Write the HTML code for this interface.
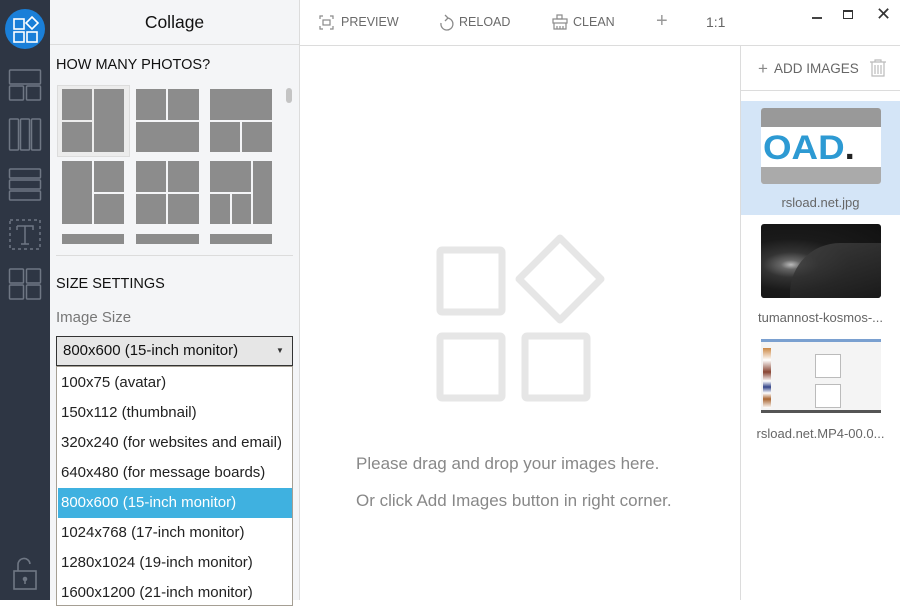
<!DOCTYPE html>
<html><head><meta charset="utf-8"><style>
*{margin:0;padding:0;box-sizing:border-box}
body{width:900px;height:600px;overflow:hidden;position:relative;background:#fff;font-family:"Liberation Sans","Noto Sans CJK SC",sans-serif;color:#222}
.abs{position:absolute}
#side{left:0;top:0;width:50px;height:600px;background:#2e3644}
#left{left:50px;top:0;width:250px;height:600px;background:#f4f5f7;border-right:1px solid #dcdcdc}
.t{position:absolute;white-space:nowrap}
.g{position:absolute;background:#8c8c8c}
.tb{color:#6a6a6a;font-size:12.5px}
.opt{position:absolute;left:1px;width:234px;height:30px;line-height:30px;padding-left:3px;font-size:15px;color:#222}
</style></head><body>
<div id="side" class="abs">
  <div class="abs" style="left:5px;top:9px;width:40px;height:40px;border-radius:50%;background:#1a7fd8"></div>
  <svg class="abs" style="left:0;top:0" width="50" height="300" fill="none" stroke="#fff" stroke-width="1.6">
    <rect x="14" y="19" width="10" height="10"/><rect x="14" y="32" width="10" height="10"/><rect x="27" y="32" width="10" height="10"/>
    <path d="M32 17 L38 23 L32 29 L26 23Z"/>
    <g stroke="#6f7784" stroke-width="1.5">
      <rect x="9.5" y="70" width="31" height="14" rx="1"/><rect x="9.5" y="86" width="14" height="14" rx="1"/><rect x="26.5" y="86" width="14" height="14" rx="1"/>
      <rect x="9.5" y="119" width="9" height="31" rx="1"/><rect x="20.5" y="119" width="9" height="31" rx="1"/><rect x="31.5" y="119" width="9" height="31" rx="1"/>
      <rect x="9.5" y="169" width="31" height="9" rx="1"/><rect x="9.5" y="180" width="31" height="9" rx="1"/><rect x="9.5" y="191" width="31" height="9" rx="1"/>
      <rect x="10" y="220" width="30" height="29" stroke-dasharray="3 3"/>
      <path d="M17 226 H33 V230 M17 226 V230 M25 226 V244 M21 244 H29"/>
      <rect x="9.5" y="269" width="14" height="14" rx="1"/><rect x="26.5" y="269" width="14" height="14" rx="1"/><rect x="9.5" y="285" width="14" height="14" rx="1"/><rect x="26.5" y="285" width="14" height="14" rx="1"/>
    </g>
  </svg>
  <svg class="abs" style="left:0;top:555px" width="50" height="45" fill="none" stroke="#6f7784" stroke-width="1.6">
    <rect x="14" y="16" width="22" height="18"/><path d="M18 16 V10 a6 6 0 0 1 12 -1"/><circle cx="25" cy="24" r="1.5" fill="#6f7784"/><path d="M25 25 V29"/>
  </svg>
</div>
<div id="left" class="abs">
  <div class="t" style="left:0;width:249px;text-align:center;top:12px;font-size:17.5px;color:#111">Collage</div>
  <div class="abs" style="left:0;top:44px;width:249px;height:1px;background:#dcdcdc"></div>
  <div class="t" style="left:6px;top:57px;font-size:14.5px;color:#111">HOW MANY PHOTOS?</div>
  <div class="abs" style="left:236px;top:88px;width:6px;height:15px;border-radius:3px;background:#c4c4c4"></div>
  <div class="abs" style="left:7px;top:85px;width:73px;height:72px;background:#ececec;border:1px solid #dcdcdc"></div>
  <div class="g" style="left:12px;top:89px;width:30px;height:31px"></div><div class="g" style="left:44px;top:89px;width:30px;height:63px"></div><div class="g" style="left:12px;top:122px;width:30px;height:30px"></div>
  <div class="g" style="left:86px;top:89px;width:30px;height:31px"></div><div class="g" style="left:118px;top:89px;width:31px;height:31px"></div><div class="g" style="left:86px;top:122px;width:63px;height:30px"></div>
  <div class="g" style="left:160px;top:89px;width:62px;height:31px"></div><div class="g" style="left:160px;top:122px;width:30px;height:30px"></div><div class="g" style="left:192px;top:122px;width:30px;height:30px"></div>
  <div class="g" style="left:12px;top:161px;width:30px;height:63px"></div><div class="g" style="left:44px;top:161px;width:30px;height:31px"></div><div class="g" style="left:44px;top:194px;width:30px;height:30px"></div>
  <div class="g" style="left:86px;top:161px;width:30px;height:31px"></div><div class="g" style="left:118px;top:161px;width:31px;height:31px"></div><div class="g" style="left:86px;top:194px;width:30px;height:30px"></div><div class="g" style="left:118px;top:194px;width:31px;height:30px"></div>
  <div class="g" style="left:160px;top:161px;width:41px;height:31px"></div><div class="g" style="left:203px;top:161px;width:19px;height:63px"></div><div class="g" style="left:160px;top:194px;width:20px;height:30px"></div><div class="g" style="left:182px;top:194px;width:19px;height:30px"></div>
  <div class="g" style="left:12px;top:234px;width:62px;height:10px"></div><div class="g" style="left:86px;top:234px;width:63px;height:10px"></div><div class="g" style="left:160px;top:234px;width:62px;height:10px"></div>
  <div class="abs" style="left:6px;top:255px;width:237px;height:1px;background:#dcdcdc"></div>
  <div class="t" style="left:6px;top:276px;font-size:14.5px;color:#111">SIZE SETTINGS</div>
  <div class="t" style="left:6px;top:309px;font-size:15px;color:#777">Image Size</div>
  <div class="abs" style="left:6px;top:336px;width:237px;height:30px;background:#e6e6e6;border:1px solid #333"></div>
  <div class="t" style="left:13px;top:342px;font-size:15px;color:#111">800x600 (15-inch monitor)</div>
  <div class="t" style="left:226px;top:346px;font-size:8px;color:#333">▼</div>
  <div class="abs" style="left:6px;top:366px;width:237px;height:240px;background:#fff;border:1px solid #a59f94">
    <div class="opt" style="top:1px">100x75 (avatar)</div>
    <div class="opt" style="top:31px">150x112 (thumbnail)</div>
    <div class="opt" style="top:61px">320x240 (for websites and email)</div>
    <div class="opt" style="top:91px">640x480 (for message boards)</div>
    <div class="opt" style="top:121px;background:#3fb1e0;color:#fff">800x600 (15-inch monitor)</div>
    <div class="opt" style="top:151px">1024x768 (17-inch monitor)</div>
    <div class="opt" style="top:181px">1280x1024 (19-inch monitor)</div>
    <div class="opt" style="top:211px">1600x1200 (21-inch monitor)</div>
  </div>
</div>
<div class="abs" style="left:300px;top:45px;width:600px;height:1px;background:#dcdcdc"></div>
<svg class="abs" style="left:318px;top:14px" width="18" height="18" fill="none" stroke="#8a8a8a" stroke-width="1.2"><path d="M2 5V2H5M12 2H15V5M15 12V15H12M5 15H2V12"/><rect x="5" y="6" width="7" height="5"/></svg>
<div class="t tb" style="left:341px;top:15px">PREVIEW</div>
<svg class="abs" style="left:438px;top:14px" width="16" height="18" fill="none" stroke="#8a8a8a" stroke-width="1.3"><path d="M9 4 A6 6 0 1 1 3 9"/><path d="M7 1 L10 4 L7 7"/></svg>
<div class="t tb" style="left:459px;top:15px">RELOAD</div>
<svg class="abs" style="left:551px;top:13px" width="18" height="18" fill="none" stroke="#8a8a8a" stroke-width="1.2"><rect x="6" y="2" width="5" height="4"/><rect x="2" y="6" width="14" height="4"/><path d="M3 10V16H15V10M6 13V16M9 13V16M12 13V16"/></svg>
<div class="t tb" style="left:573px;top:15px">CLEAN</div>
<div class="t" style="left:656px;top:10px;font-size:20px;color:#999">+</div>
<div class="t" style="left:706px;top:14px;font-size:14px;color:#666">1:1</div>
<div class="abs" style="left:812px;top:17px;width:10px;height:2px;background:#444"></div>
<div class="abs" style="left:843px;top:10px;width:10px;height:9px;border:1px solid #333;border-top:2px solid #333;background:#fff"></div>
<div class="t" style="left:876px;top:4px;font-size:18px;color:#333">✕</div>
<svg class="abs" style="left:420px;top:225px" width="200" height="185" fill="none" stroke="#e6e6e6" stroke-width="7" stroke-linejoin="round">
  <rect x="20" y="25" width="62" height="62" rx="2"/>
  <rect x="20" y="111" width="62" height="62" rx="2"/>
  <rect x="105" y="111" width="62" height="62" rx="2"/>
  <path d="M140 13 L181 54 L140 95 L99 54Z"/>
</svg>
<div class="t" style="left:356px;top:454px;font-size:17px;color:#888">Please drag and drop your images here.</div>
<div class="t" style="left:356px;top:491px;font-size:17px;color:#888">Or click Add Images button in right corner.</div>
<div class="abs" style="left:740px;top:46px;width:1px;height:554px;background:#dcdcdc"></div>
<div class="abs" style="left:741px;top:90px;width:159px;height:1px;background:#dcdcdc"></div>
<div class="t" style="left:758px;top:59px;font-size:17px;color:#888">+</div>
<div class="t" style="left:774px;top:61px;font-size:13.5px;color:#666">ADD IMAGES</div>
<svg class="abs" style="left:868px;top:58px" width="20" height="20" fill="none" stroke="#bbb" stroke-width="1.2"><path d="M2 4H18M7 4V2H13V4M4 4V18H16V4M7 7V16M10 7V16M13 7V16"/></svg>
<div class="abs" style="left:741px;top:101px;width:159px;height:114px;background:#d4e5f7"></div>
<div class="abs" style="left:761px;top:108px;width:120px;height:76px;background:#fff;border-radius:3px;overflow:hidden">
  <div style="height:19px;background:#999"></div>
  <div style="position:absolute;left:2px;top:21px;font:bold 34px 'Liberation Sans',sans-serif;color:#2d9ad3;transform:scaleX(1.08);transform-origin:0 0">OAD<span style="color:#222">.</span></div>
  <div style="position:absolute;left:0;bottom:0;width:120px;height:17px;background:#aaa"></div>
</div>
<div class="t" style="left:741px;width:159px;text-align:center;top:195px;font-size:13px;color:#666">rsload.net.jpg</div>
<div class="abs" style="left:761px;top:224px;width:120px;height:74px;border-radius:3px;background:radial-gradient(ellipse at 25% 55%,#bbb 0,#666 8%,#333 22%,#1a1a1a 45%,#111 100%),#111"></div>
<div class="abs" style="left:790px;top:243px;width:91px;height:55px;background:linear-gradient(165deg,#444 0,#333 40%,#1c1c1c 100%);border-radius:50px 0 3px 0;opacity:.8"></div>
<div class="t" style="left:741px;width:159px;text-align:center;top:310px;font-size:13px;color:#666">tumannost-kosmos-...</div>
<div class="abs" style="left:761px;top:339px;width:120px;height:74px;background:#f4f4f4;border-top:3px solid #7aa0d0;border-bottom:3px solid #555">
  <div class="abs" style="left:2px;top:6px;width:8px;height:60px;background:linear-gradient(#c84 0,#fff 20%,#843 40%,#fff 55%,#348 65%,#fff 75%,#a63 85%,#fff)"></div>
  <div class="abs" style="left:54px;top:12px;width:26px;height:24px;border:1px solid #bbb;background:#fff"></div>
  <div class="abs" style="left:54px;top:42px;width:26px;height:24px;border:1px solid #bbb;background:#fff"></div>
</div>
<div class="t" style="left:741px;width:159px;text-align:center;top:426px;font-size:13px;color:#666">rsload.net.MP4-00.0...</div>
</body></html>
